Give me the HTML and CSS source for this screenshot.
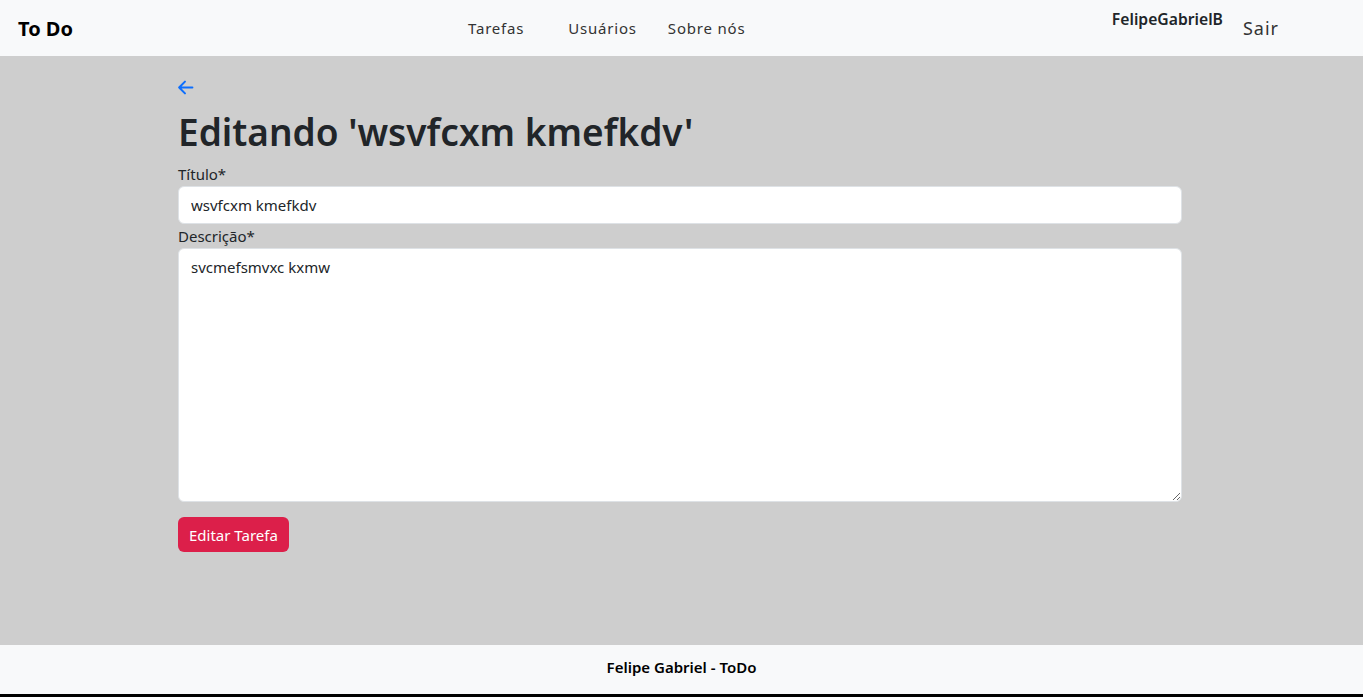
FILE: index.html
```html
<!DOCTYPE html>
<html lang="pt-BR">
<head>
<meta charset="utf-8">
<title>To Do</title>
<link rel="stylesheet" href="styles.css">
</head>
<body>
<header class="navbar">
  <div class="brand">To Do</div>
  <nav class="nav-links">
    <a class="nav-link first">Tarefas</a>
    <a class="nav-link">Usuários</a>
    <a class="nav-link">Sobre nós</a>
  </nav>
  <div class="nav-user">
    <span class="username">FelipeGabrielB</span>
    <a class="logout">Sair</a>
  </div>
</header>
<main class="main">
  <div class="container">
    <a class="back" aria-label="Voltar">
      <svg viewBox="0 0 16 16" fill="none" stroke="currentColor" stroke-width="1.9" stroke-linecap="round" stroke-linejoin="round"><path d="M14.5 8H2M7.5 2.5 2 8l5.5 5.5"/></svg>
    </a>
    <h1 class="title">Editando 'wsvfcxm kmefkdv'</h1>
    <form class="form">
      <label class="label" for="titulo">Título*</label>
      <input class="input" id="titulo" type="text" value="wsvfcxm kmefkdv">
      <label class="label" for="desc">Descrição*</label>
      <textarea class="input textarea" id="desc">svcmefsmvxc kxmw</textarea>
      <button class="btn" type="button">Editar Tarefa</button>
    </form>
  </div>
</main>
<footer class="footer">Felipe Gabriel - ToDo</footer>
</body>
</html>
```
FILE: styles.css
```css
* { box-sizing: border-box; }
html, body { margin: 0; padding: 0; }
body {
  font-family: "Noto Sans", "Open Sans", sans-serif;
  font-size: 16px;
  color: #212529;
  background: #cecece;
  display: flex;
  flex-direction: column;
  height: 697px;
  overflow: hidden;
}
.navbar {
  height: 56px;
  background: #f8f9fa;
  display: flex;
  align-items: center;
  padding: 0 18px;
}
.brand {
  font-size: 20px;
  font-weight: 700;
  color: #000;
  width: 440px;
}
.nav-links {
  display: flex;
  margin-left: 10px;
}
.nav-link {
  font-size: 15px;
  color: #333;
  letter-spacing: 0.8px;
  margin-right: 31px;
}
.nav-link.first { margin-right: 44px; }
.nav-user {
  margin-left: auto;
  display: flex;
  align-items: center;
  margin-right: 66px;
}
.username {
  font-weight: 600;
  font-size: 15.7px;
  margin-top: -18px;
  color: #212529;
}
.logout {
  font-size: 18px;
  letter-spacing: 1px;
  color: #333;
  margin-left: 20px;
}
.main {
  flex: 1;
  display: flex;
  justify-content: center;
  padding-right: 3px;
}
.container {
  width: 1004px;
  padding-top: 22px;
}
.back {
  display: block;
  color: #0d6efd;
  height: 18px;
  margin-left: -1px;
}
.back svg { display: block; width: 17px; height: 17px; margin-top: 1px; }
.title {
  font-size: 37px;
  font-weight: 600;
  margin: 13px 0 8px;
  line-height: 44px;
}
.form { display: flex; flex-direction: column; align-items: flex-start; }
.label { font-size: 15px; line-height: 24px; }
.input {
  width: 100%;
  height: 38px;
  border: 1px solid #dee2e6;
  border-radius: 6px;
  background: #fff;
  padding: 6px 12px;
  font-family: inherit;
  font-size: 15px;
  color: #212529;
}
.textarea {
  height: 254px;
  resize: vertical;
  padding-top: 8px;
}
.btn {
  margin-top: 15px;
  background: #dc1f4a;
  color: #fff;
  border: none;
  border-radius: 6px;
  height: 35px;
  padding: 0 11px;
  font-family: inherit;
  font-size: 15px;
}
.footer {
  height: 52px;
  background: #f8f9fa;
  border-bottom: 3px solid #000;
  display: flex;
  align-items: center;
  justify-content: center;
  padding-bottom: 5px;
  font-weight: 600;
  font-size: 15px;
  color: #000;
}
```
